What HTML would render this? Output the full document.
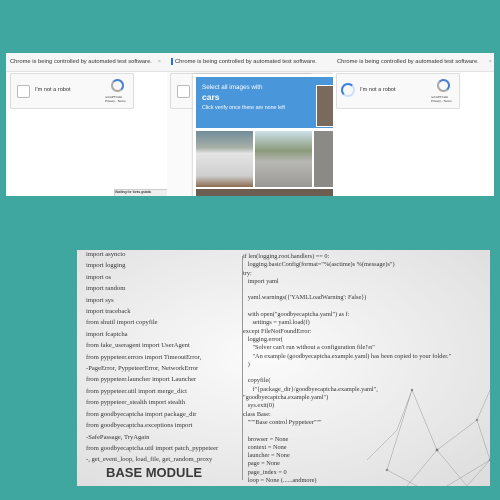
<!DOCTYPE html>
<html><head><style>
body{margin:0;width:500px;height:500px;background:#3fa6a0;position:relative;overflow:hidden;font-family:"Liberation Sans",sans-serif}
.p{position:absolute;top:53px;height:143px;background:#fff;overflow:hidden}
.bar{position:absolute;left:0;right:0;top:0;height:18px;border-bottom:1px solid #e3e3e3;background:#f6f6f6;font-size:5.8px;color:#333;line-height:18px;padding-left:4px;white-space:nowrap}
.cap{position:absolute;top:20px;height:34px;border:1px solid #ddd;background:#f9f9f9;border-radius:2px}
.cb{position:absolute;left:6px;top:11px;width:11px;height:11px;border:1px solid #bbb;background:#fff;border-radius:2px}
.t{position:absolute;font-size:5.6px;color:#333}
.logo{position:absolute;width:9px;height:9px;border-radius:50%;border:2px solid #4a7fd6;border-left-color:#aaa;border-bottom-color:#aaa}
.code{position:absolute;font-family:"Liberation Serif",serif;font-size:6.6px;color:#333;line-height:11.3px;white-space:pre}
</style></head><body>
<div class="p" style="left:6px;width:161px">
<div class="bar">Chrome is being controlled by automated test software.<span style="position:absolute;right:6px;color:#aaa">×</span></div>
<div class="cap" style="left:4px;width:122px"><div class="cb"></div><div class="t" style="left:24px;top:13px">I'm not a robot</div><div class="logo" style="left:100px;top:5px"></div><div class="t" style="left:94px;top:21px;font-size:3px">reCAPTCHA<br>Privacy - Terms</div></div>
<div style="position:absolute;left:108px;top:136px;width:55px;height:8px;border:1px solid #ccc;background:#eee;font-size:3.5px">Waiting for fonts.gstatic</div>
</div>
<div class="p" style="left:167px;width:166px;background:#fafafa">
<div class="bar" style="background:#f6f6f6"><span style="display:inline-block;width:2px;height:7px;background:#2a6fe0;vertical-align:middle;margin-right:2px"></span>Chrome is being controlled by automated test software.</div>
<div class="cap" style="left:3px;width:140px"><div class="cb"></div></div>
<div style="position:absolute;left:26px;top:21px;width:140px;height:130px;background:#fff;box-shadow:0 0 2px #aaa"></div>
<div style="position:absolute;left:29px;top:24px;width:140px;height:51px;background:#4a96db;color:#fff">
<div style="position:absolute;left:6px;top:7px;font-size:6.3px">Select all images with</div>
<div style="position:absolute;left:6px;top:15px;font-size:8.5px;font-weight:bold">cars</div>
<div style="position:absolute;left:6px;top:28px;font-size:5.3px">Click verify once there are none left</div>
<div style="position:absolute;left:120px;top:8px;width:20px;height:40px;background:#7a6a5e;border:1px solid #fff"></div>
</div>
<div style="position:absolute;left:29px;top:78px;width:57px;height:56px;background:linear-gradient(#708c9a 0,#a8b0a8 30%,#e4e4e4 40%,#cfcfcf 80%,#8a6c50)"></div>
<div style="position:absolute;left:88px;top:78px;width:57px;height:56px;background:linear-gradient(#cde2ea 0,#8b9a7a 35%,#b8b8b4 55%,#9a9894)"></div>
<div style="position:absolute;left:147px;top:78px;width:20px;height:56px;background:#8c8a86"></div>
<div style="position:absolute;left:29px;top:136px;width:140px;height:8px;background:#6b5e50"></div>
</div>
<div class="p" style="left:333px;width:161px">
<div class="bar">Chrome is being controlled by automated test software.<span style="position:absolute;right:2px;color:#aaa">×</span></div>
<div class="cap" style="left:3px;width:122px"><div style="position:absolute;left:4px;top:9px;width:10px;height:10px;border-radius:50%;border:2px solid #cfe0f7;border-top-color:#3d7fe0;border-left-color:#3d7fe0"></div><div class="t" style="left:23px;top:13px">I'm not a robot</div><div class="logo" style="left:100px;top:5px"></div><div class="t" style="left:94px;top:21px;font-size:3px">reCAPTCHA<br>Privacy - Terms</div></div>
</div>
<div style="position:absolute;left:77px;top:250px;width:413px;height:236px;background:radial-gradient(ellipse at 45% 45%,#fbfbfb,#e6e6e6 70%,#dcdcdc);overflow:hidden">
<svg style="position:absolute;left:270px;top:100px" width="143" height="136" stroke="#999" stroke-width="0.5" fill="none"><path d="M65 40L40 120M65 40L90 100L130 70L143 40M90 100L120 136M130 70L143 110L100 136M40 120L70 136M143 110L120 136M20 110L50 80L65 40M90 100L60 136"/><g fill="#666"><circle cx="65" cy="40" r="1"/><circle cx="90" cy="100" r="1.2"/><circle cx="130" cy="70" r="1"/><circle cx="143" cy="110" r="1"/><circle cx="40" cy="120" r="1"/></g></svg>
<div class="code" style="left:9px;top:-1px;line-height:11.4px">import asyncio
import logging
import os
import random
import sys
import traceback
from shutil import copyfile
import fcaptcha
from fake_useragent import UserAgent
from pyppeteer.errors import TimeoutError,
-PageError, PyppeteerError, NetworkError
from pyppeteer.launcher import Launcher
from pyppeteer.util import merge_dict
from pyppeteer_stealth import stealth
from goodbyecaptcha import package_dir
from goodbyecaptcha.exceptions import
-SafePassage, TryAgain
from goodbyecaptcha.util import patch_pyppeteer
-, get_event_loop, load_file, get_random_proxy</div>
<div style="position:absolute;left:165px;top:6px;width:1px;height:224px;background:#999"></div>
<div class="code" style="left:166px;top:3px;line-height:8.3px;font-size:6.3px">if len(logging.root.handlers) == 0:
   logging.basicConfig(format="%(asctime)s %(message)s")
try:
   import yaml

   yaml.warnings({'YAMLLoadWarning': False})

   with open("goodbyecaptcha.yaml") as f:
      settings = yaml.load(f)
except FileNotFoundError:
   logging.error(
      "Solver can't run without a configuration file!\n"
      "An example (goodbyecaptcha.example.yaml) has been copied to your folder."
   )

   copyfile(
      f"{package_dir}/goodbyecaptcha.example.yaml",
"goodbyecaptcha.example.yaml")
   sys.exit(0)
class Base:
   """Base control Pyppeteer"""

   browser = None
   context = None
   launcher = None
   page = None
   page_index = 0
   loop = None (......andmore)</div>
<div style="position:absolute;left:29px;top:215px;font-size:13px;font-weight:bold;color:#3a3a3a;font-family:'Liberation Sans',sans-serif">BASE MODULE</div>
</div>
</body></html>
